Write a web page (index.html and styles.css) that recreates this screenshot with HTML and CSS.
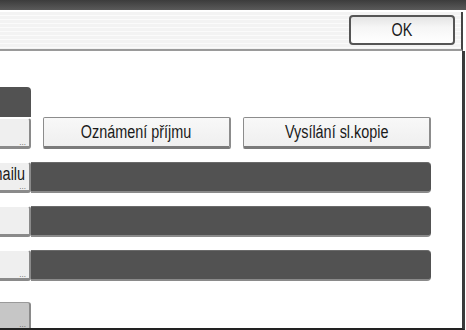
FILE: index.html
```html
<!DOCTYPE html>
<html lang="cs">
<head>
    <meta charset="UTF-8">
    <title>Nastavení e-mailu</title>
    <link rel="stylesheet" href="styles.css">
</head>
<body>
    <div class="screen">
        <div class="title-bar"></div>
        <div class="tool-bar">
            <button class="ok-button"><span class="narrow">OK</span></button>
        </div>

        <div class="panel">
            <div class="row row-first">
                <div class="stub stub-dark"></div>
            </div>

            <div class="row">
                <div class="stub"><span class="dots">...</span></div>
                <div class="choices">
                    <button class="choice"><span class="narrow">Oznámení příjmu</span></button>
                    <button class="choice"><span class="narrow">Vysílání sl.kopie</span></button>
                </div>
            </div>

            <div class="row">
                <div class="stub"><span class="stub-label narrow">Typ e-mailu</span><span class="dots">...</span></div>
                <div class="field"></div>
            </div>

            <div class="row">
                <div class="stub"></div>
                <div class="field"></div>
            </div>

            <div class="row">
                <div class="stub"><span class="dots">...</span></div>
                <div class="field"></div>
            </div>

            <div class="row row-last">
                <div class="stub stub-disabled"><span class="dots">...</span></div>
            </div>
        </div>
    </div>
</body>
</html>
```

FILE: styles.css
```css
body {
    margin: 0;
    font-family: "Liberation Sans", Arial, sans-serif;
    background-color: #ffffff;
}

.screen {
    width: 466px;
    height: 330px;
    display: flex;
    flex-direction: column;
    overflow: hidden;
}

/* condensed panel lettering */
.narrow {
    display: inline-block;
    transform: scaleX(0.8);
    white-space: nowrap;
}

.title-bar {
    height: 10px;
    background: linear-gradient(#3c3c3c, #5a5a5a);
    flex-shrink: 0;
}

.tool-bar {
    height: 37px;
    margin-top: 2px;
    margin-right: 3px;
    border-right: 2px solid #444;
    border-bottom: 2px solid #9a9a9a;
    background: repeating-linear-gradient(#f3f3f3 0, #f3f3f3 3px, #fbfbfb 3px, #fbfbfb 4px);
    display: flex;
    justify-content: flex-end;
    align-items: flex-start;
    padding-right: 6px;
    flex-shrink: 0;
}

.ok-button {
    margin-top: 3px;
    width: 106px;
    height: 30px;
    border: 2px solid #555;
    border-radius: 4px;
    background: linear-gradient(#e4e4e4, #f6f6f6 40%, #ffffff);
    font-family: inherit;
    font-size: 18px;
    color: #1a1a1a;
    padding: 0;
}

.panel {
    flex: 1;
    margin-right: 1px;
    border-right: 3px solid #3a3a3a;
    border-bottom: 2px solid #222;
    padding-top: 36px;
    display: flex;
    flex-direction: column;
}

.row {
    display: flex;
    height: 31px;
    margin-bottom: 13px;
}

.row-first {
    height: 30px;
    margin-bottom: 1px;
}

.row-last {
    margin-top: 8px;
    flex: 1;
    margin-bottom: 0;
}

.stub {
    width: 31px;
    flex-shrink: 0;
    box-sizing: border-box;
    background-color: #efefef;
    border-top: 1px solid #ffffff;
    border-right: 2px solid #8a8a8a;
    border-bottom: 3px solid #8a8a8a;
    border-radius: 0 3px 3px 0;
    position: relative;
    display: flex;
    justify-content: flex-end;
    align-items: flex-start;
    overflow: hidden;
}

.stub-dark {
    background-color: #525252;
    border: none;
    border-radius: 0 4px 0 0;
}

.stub-disabled {
    background-color: #c6c6c6;
    border-top: 1px solid #9a9a9a;
    border-bottom: none;
    border-radius: 0 3px 0 0;
}

.stub-label {
    font-size: 18px;
    line-height: 20px;
    color: #1a1a1a;
    margin-top: 1px;
    margin-right: 4px;
    transform-origin: right center;
}

.dots {
    position: absolute;
    right: 3px;
    bottom: 0;
    font-size: 8px;
    line-height: 6px;
    color: #555;
}

.choices {
    display: flex;
    gap: 12px;
    margin-left: 12px;
    margin-top: -1px;
}

.choice {
    width: 188px;
    height: 32px;
    box-sizing: border-box;
    border: 1px solid #8c8c8c;
    border-bottom: 3px solid #7a7a7a;
    border-right: 2px solid #8c8c8c;
    border-radius: 2px;
    background: linear-gradient(#f8f8f8, #efefef);
    font-family: inherit;
    font-size: 18px;
    color: #1a1a1a;
    padding: 0;
}

.field {
    width: 400px;
    box-sizing: border-box;
    background-color: #525252;
    border-top: 1px solid #6a6a6a;
    border-bottom: 2px solid #8a8a8a;
    border-radius: 0 4px 4px 0;
}
```
